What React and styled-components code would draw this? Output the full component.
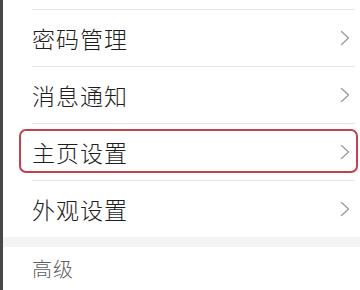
import styled, { createGlobalStyle } from "styled-components";

const GlobalStyle = createGlobalStyle`
  html, body {
    margin: 0;
    padding: 0;
    background: #ffffff;
  }
  body {
    font-family: "Noto Sans CJK SC", "Noto Sans", sans-serif;
  }
`;

// 전체 화면
const Screen = styled.div`
  display: flex;
  width: 360px;
  height: 290px;
  overflow: hidden;
  background: #ffffff;
`;

// 왼쪽 어두운 띠
const EdgeBar = styled.div`
  width: 3px;
  flex-shrink: 0;
  background: #484848;
`;

const Content = styled.div`
  flex: 1;
  display: flex;
  flex-direction: column;
  padding-top: 9px;
`;

// 설정 한 줄
const Row = styled.div`
  position: relative;
  height: 56px;
  margin: 0 5px 0 29px;
  padding-right: 5px;
  border-top: 1px solid #e6e6e6;
  display: flex;
  align-items: center;
  justify-content: space-between;

  ${({ $highlight }) =>
    $highlight &&
    `
    &::before {
      content: "";
      position: absolute;
      left: -13px;
      right: -3px;
      top: 5px;
      bottom: 7px;
      border: 2px solid #c2414c;
      border-radius: 7px;
      pointer-events: none;
    }
  `}
`;

const Label = styled.span`
  font-size: 23px;
  font-weight: 300;
  color: #1e1e1e;
  letter-spacing: 1px;
  line-height: 1;
`;

// 회색 구분 띠
const Gap = styled.div`
  height: 10px;
  background: #f4f4f4;
`;

const SectionTitle = styled.div`
  height: 43px;
  padding-left: 29px;
  display: flex;
  align-items: center;
  font-size: 20px;
  font-weight: 300;
  color: #5e5e5e;
  letter-spacing: 1px;
`;

const Chevron = () => (
  <svg width="10" height="16" viewBox="0 0 10 16" fill="none">
    <path d="M1.5 1.5 L8.5 8 L1.5 14.5" stroke="#9a9a9a" strokeWidth="1.3" strokeLinecap="round" strokeLinejoin="round" />
  </svg>
);

const items = [
  { label: "密码管理" },
  { label: "消息通知" },
  { label: "主页设置", highlight: true },
  { label: "外观设置" },
];

const App = () => {
  return (
    <>
      <GlobalStyle />
      <Screen>
        <EdgeBar />
        <Content>
          {items.map((item) => (
            <Row key={item.label} $highlight={item.highlight}>
              <Label>{item.label}</Label>
              <Chevron />
            </Row>
          ))}
          <Gap />
          <SectionTitle>高级</SectionTitle>
        </Content>
      </Screen>
    </>
  );
};

export default App;
